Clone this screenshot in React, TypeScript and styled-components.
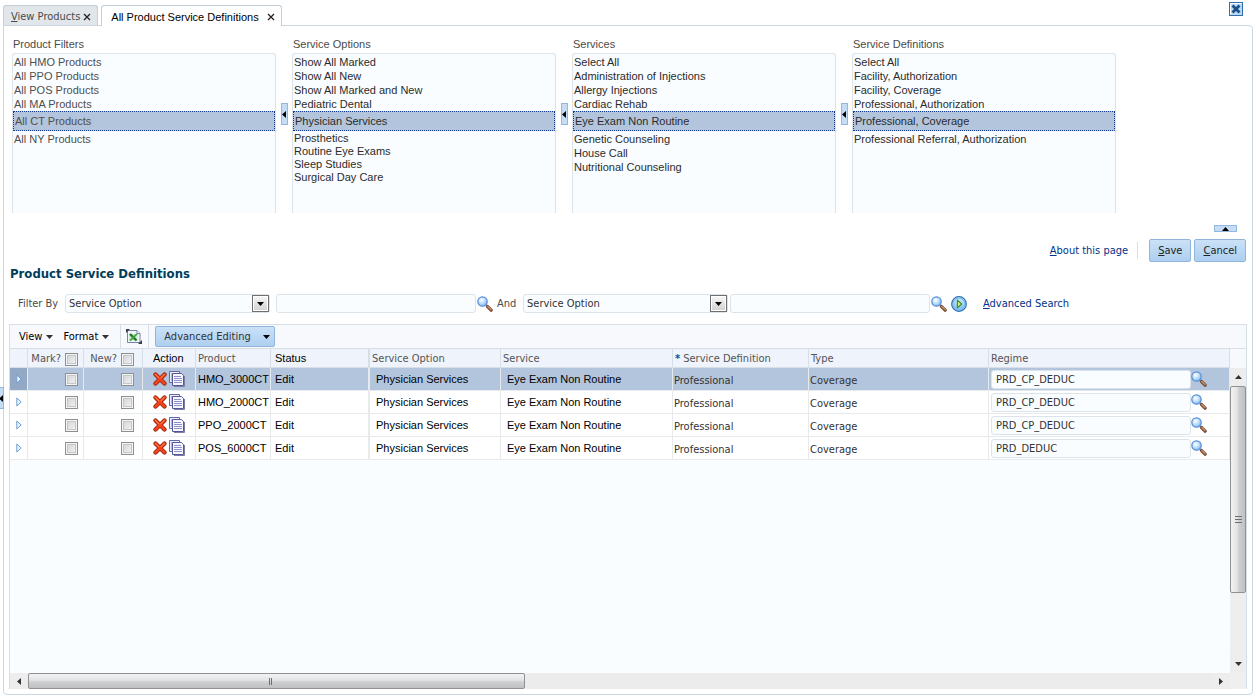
import React from "react";
import styled, { createGlobalStyle, css } from "styled-components";

const sans = `"Liberation Sans", Arial, sans-serif`;
const tahoma = `Tahoma, "DejaVu Sans Condensed", "DejaVu Sans", sans-serif`;
const line = "#d6dfe6";
const selected = "#b3c5dc";
const pale = "#fafdff";

const GlobalStyle = createGlobalStyle`
  * { box-sizing: border-box; }
  body { margin: 0; background: #fff; color: #333; font: 11px/14px ${sans}; }
  button, input, select { font: inherit; color: inherit; margin: 0; }
  button { cursor: pointer; }
  svg { display: block; flex: none; }
`;

const Page = styled.div`
  min-height: 100vh;
  display: flex;
  flex-direction: column;
  padding: 5px 3px 3px;
`;

/* ---------- tabs ---------- */
const TabBar = styled.div`
  display: flex;
  align-items: flex-end;
  gap: 3px;
  height: 20px;
`;

const Tab = styled.div<{ $active?: boolean }>`
  display: flex;
  align-items: center;
  gap: ${(p) => (p.$active ? 8 : 3)}px;
  height: ${(p) => (p.$active ? 21 : 20)}px;
  margin-bottom: ${(p) => (p.$active ? -1 : 0)}px;
  padding: 2px 6px 0 ${(p) => (p.$active ? 9 : 7)}px;
  border: 1px solid #c3ced8;
  border-bottom: 0;
  border-radius: 3px 3px 0 0;
  background: ${(p) => (p.$active ? "#fff" : "#e0e6ea")};
  color: ${(p) => (p.$active ? "#000" : "#4a4a4a")};
  z-index: 1;
`;

const TabLabel = styled.button<{ $wide?: boolean }>`
  padding: 0;
  border: 0;
  background: none;
  white-space: nowrap;
  font-family: ${(p) => (p.$wide ? sans : tahoma)};
`;

const IconButton = styled.button`
  display: flex;
  padding: 0;
  border: 0;
  background: none;
`;

const WindowClose = styled(IconButton)`
  margin: 0 10px 0 auto;
  height: 23px;
`;

const Panel = styled.main`
  flex: 1;
  display: flex;
  flex-direction: column;
  border: 1px solid #ccd6e2;
  border-radius: 0 4px 4px 4px;
  padding: 0 5px 5px;
`;

/* ---------- filter lists ---------- */
const Filters = styled.section`
  display: flex;
  padding: 10px 3px 0;
`;

const FilterColumn = styled.div`
  flex: 0 1 264px;
  min-width: 0;
`;

const FilterLabel = styled.div`
  padding-left: 1px;
  line-height: 17px;
  color: #4a4a4a;
`;

const List = styled.ul`
  height: 160px;
  margin: 0;
  padding: 1px 0;
  list-style: none;
  border: 1px solid #dde4e9;
  border-bottom: 0;
  border-radius: 3px 3px 0 0;
  background: ${pale};
`;

const Option = styled.li<{ $selected?: boolean; $muted?: boolean; $after?: boolean; $tight?: boolean }>`
  height: ${(p) => (p.$tight ? 13 : 14)}px;
  line-height: ${(p) => (p.$tight ? 13 : 14)}px;
  padding-left: 1px;
  white-space: nowrap;
  color: ${(p) => (p.$muted ? "#4f4f4f" : "#2b2b2b")};
  ${(p) =>
    p.$selected &&
    css`
      height: 20px;
      line-height: 18px;
      border: 1px dotted #123a8c;
      background: ${selected};
    `}
  ${(p) => p.$after && css`margin-top: 1px;`}
`;

const SplitColumn = styled.div`
  flex: 0 0 16px;
  display: flex;
  justify-content: center;
  padding-top: 67px;
`;

const Collapser = styled.button<{ $wide?: boolean }>`
  display: flex;
  align-items: center;
  justify-content: center;
  width: ${(p) => (p.$wide ? 23 : 7)}px;
  height: ${(p) => (p.$wide ? 7 : 22)}px;
  padding: 0;
  border: 1px solid #94b7de;
  background: #c5dcf5;
`;

const EdgeCollapser = styled(Collapser)`
  position: absolute;
  left: -3px;
  top: 387px;
`;

const CollapseRow = styled.div`
  display: flex;
  justify-content: flex-end;
  padding: 12px 10px 7px 0;
`;

/* ---------- actions ---------- */
const Actions = styled.div`
  display: flex;
  align-items: center;
  justify-content: flex-end;
  gap: 3px;
  padding-right: 1px;
`;

const Link = styled.a`
  color: #003286;
  font-family: ${tahoma};
  text-decoration: none;
  white-space: nowrap;
`;

const Divider = styled.span`
  width: 1px;
  height: 17px;
  margin: 0 8px 0 6px;
  background: ${line};
`;

const Button = styled.button`
  height: 23px;
  padding: 0 8px;
  border: 1px solid #8fb5dd;
  border-radius: 2px;
  background: linear-gradient(#cbe1f7, #aecff0);
  color: #222;
  font-family: ${tahoma};
`;

const Title = styled.h1`
  margin: 3px 0 11px 1px;
  color: #003d5b;
  font: bold 13px/18px ${tahoma};
`;

/* ---------- query row ---------- */
const Query = styled.form`
  display: flex;
  align-items: center;
  padding-left: 9px;
  font-family: ${tahoma};
`;

const QueryLabel = styled.label<{ $width: number }>`
  width: ${(p) => p.$width}px;
  color: #4a4a4a;
  white-space: nowrap;
`;

const SelectBox = styled.div<{ $gap: number }>`
  position: relative;
  flex: 0 1 205px;
  margin-right: ${(p) => p.$gap}px;
`;

const Select = styled.select`
  appearance: none;
  display: block;
  width: 100%;
  height: 19px;
  padding: 0 20px 0 3px;
  border: 1px solid #dde4e9;
  border-radius: 3px;
  background: ${pale};
  color: #333;
`;

const SelectArrow = styled.span`
  position: absolute;
  top: 1px;
  right: 1px;
  width: 17px;
  height: 17px;
  display: flex;
  align-items: center;
  justify-content: center;
  border: 1px solid #6f6f6f;
  background: linear-gradient(#f6f6f6, #d2d2d2);
  box-shadow: inset 0 0 0 1px #fff;
  pointer-events: none;
`;

const TextInput = styled.input`
  flex: 0 1 200px;
  width: 200px;
  min-width: 0;
  height: 19px;
  padding: 0 4px;
  border: 1px solid #dde4e9;
  border-radius: 3px;
  background: ${pale};
`;

const QueryGo = styled(IconButton)`
  margin: 0 16px 0 4px;
`;

/* ---------- grid ---------- */
const Grid = styled.section`
  flex: 1;
  display: flex;
  flex-direction: column;
  margin-top: 11px;
  border: 1px solid ${line};
  border-bottom: 0;
`;

const Toolbar = styled.div`
  display: flex;
  height: 23px;
  background: #f7f9fd;
  font-family: ${tahoma};
`;

const ToolGroup = styled.div<{ $left: number; $right: number }>`
  display: flex;
  align-items: center;
  gap: 10px;
  padding: 0 ${(p) => p.$right}px 0 ${(p) => p.$left}px;
  border-right: 1px solid ${line};
`;

const MenuButton = styled.button`
  display: flex;
  align-items: center;
  gap: 4px;
  padding: 0;
  border: 0;
  background: none;
  color: #000;
`;

const EditingButton = styled(Button)`
  display: flex;
  align-items: center;
  gap: 12px;
  height: 21px;
  margin: 1px 6px;
  padding: 0 4px 0 8px;
  color: #333;
`;

const GridArea = styled.div`
  flex: 1;
  display: grid;
  grid-template-columns: minmax(0, 1fr) 16px;
  grid-template-rows: minmax(0, 1fr) 16px;
  border-top: 1px solid ${line};
`;

const TableArea = styled.div`
  background: ${pale};
`;

const Table = styled.table`
  width: 100%;
  table-layout: fixed;
  border-spacing: 0;
`;

const HeadCell = styled.th<{ $dark?: boolean; $pad?: number; $thick?: boolean }>`
  height: 19px;
  padding: ${(p) => (p.$dark ? 0 : 2)}px 0 0 ${(p) => p.$pad ?? 2}px;
  border-right: ${(p) => (p.$thick ? 2 : 1)}px solid ${line};
  border-bottom: 1px solid ${line};
  background: #eff3fb;
  color: ${(p) => (p.$dark ? "#000" : "#555")};
  font-family: ${(p) => (p.$dark ? sans : tahoma)};
  font-weight: normal;
  text-align: left;
  white-space: nowrap;
`;

const Row = styled.tr<{ $selected?: boolean }>`
  background: ${(p) => (p.$selected ? selected : "#fff")};
`;

const Cell = styled.td<{ $pad?: number; $black?: boolean; $low?: boolean; $thick?: boolean; $current?: boolean }>`
  height: 23px;
  padding: ${(p) => (p.$low ? 3 : 0)}px 0 0 ${(p) => p.$pad ?? 2}px;
  border-right: ${(p) => (p.$thick ? 2 : 1)}px solid #e6eaed;
  border-bottom: 1px solid #e6eaed;
  color: ${(p) => (p.$black ? "#000" : "#333")};
  font-family: ${(p) => (p.$black ? sans : tahoma)};
  white-space: nowrap;
  ${(p) => p.$current && css`background: #93a8c4;`}
`;

const CheckSlot = styled.label<{ $right: number }>`
  display: flex;
  align-items: center;
  justify-content: flex-end;
  gap: 4px;
  padding-right: ${(p) => p.$right}px;
`;

const Check = styled.input.attrs({ type: "checkbox" })`
  appearance: none;
  width: 13px;
  height: 13px;
  border: 1px solid #8e8f8f;
  background: linear-gradient(135deg, #cfd1d4, #f6f6f6);
  box-shadow: inset 0 0 0 1px #f4f4f4, inset 0 0 0 2px #c3c6ca;
`;

const Inline = styled.div<{ $gap?: number }>`
  display: flex;
  align-items: center;
  gap: ${(p) => p.$gap ?? 0}px;
`;

const AndLabel = styled(QueryLabel)`
  margin-left: 4px;
`;

const SearchButton = styled(IconButton)`
  padding-left: 1px;
`;

const Required = styled.span`
  margin-right: 3px;
  color: #0b4fa0;
  font-weight: bold;
`;

/* ---------- scroll bars ---------- */
const VBar = styled.div`
  display: flex;
  flex-direction: column;
  padding-top: 19px;
  background: linear-gradient(#f7f9fd 19px, #eeeeee 19px);
`;

const HBar = styled.div`
  display: flex;
  background: #ececec;
`;

const Corner = styled.div`
  background: #efefef;
`;

const ScrollEnd = styled.button`
  flex: 0 0 18px;
  display: flex;
  align-items: center;
  justify-content: center;
  padding: 0;
  border: 0;
  background: #ededed;
`;

const Track = styled.div<{ $column?: boolean }>`
  flex: 1;
  display: flex;
  flex-direction: ${(p) => (p.$column ? "column" : "row")};
`;

const Thumb = styled.button<{ $column?: boolean }>`
  flex: 0 0 ${(p) => (p.$column ? 77 : 42)}%;
  display: flex;
  align-items: center;
  justify-content: center;
  padding: ${(p) => (p.$column ? "60px 0 0" : "0 12px 0 0")};
  border: 1px solid #8f9194;
  border-radius: 2px;
  background: linear-gradient(${(p) => (p.$column ? "90deg" : "180deg")}, #f3f3f3, #e2e3e4 45%, #cfd0d2 55%, #bfc0c2);
`;

/* ---------- drawings ---------- */
type Dir = "left" | "right" | "up" | "down";

const trianglePath: Record<Dir, [number, number, string]> = {
  left: [4, 7, "M4 0v7L0 3.5z"],
  right: [4, 7, "M0 0v7L4 3.5z"],
  up: [7, 4, "M0 4h7L3.5 0z"],
  down: [7, 4, "M0 0h7L3.5 4z"],
};

function Arrow({ dir, color = "#000" }: { dir: Dir; color?: string }) {
  const [w, h, d] = trianglePath[dir];
  return (
    <svg width={w} height={h} viewBox={`0 0 ${w} ${h}`} aria-hidden="true">
      <path d={d} fill={color} />
    </svg>
  );
}

function CloseGlyph() {
  return (
    <svg width="8" height="8" viewBox="0 0 8 8" aria-hidden="true">
      <path d="M1 1l6 6M7 1L1 7" stroke="#222" strokeWidth="1.3" fill="none" />
    </svg>
  );
}

function WindowCloseIcon() {
  return (
    <svg width="14" height="14" viewBox="0 0 14 14" aria-hidden="true">
      <rect x=".5" y=".5" width="13" height="13" fill="#b9d6f3" stroke="#2f6fb0" />
      <path d="M1.500 12.500V1.500h11" stroke="#fff" fill="none" />
      <path d="M3.500 3.500l7 7M10.500 3.500l-7 7" stroke="#1b4f87" strokeWidth="2.800" fill="none" />
    </svg>
  );
}

function SearchIcon() {
  return (
    <svg width="16" height="16" viewBox="0 0 16 16" aria-hidden="true">
      <defs>
        <radialGradient id="lens" cx=".4" cy=".35" r=".65">
          <stop offset="0" stopColor="#fff" />
          <stop offset=".6" stopColor="#b9dcfb" />
          <stop offset="1" stopColor="#7fb4ee" />
        </radialGradient>
      </defs>
      <path d="M9 9l1.800 1.800" stroke="#7c8ea5" strokeWidth="2" />
      <path d="M10.600 10.600l3.500 3.500" stroke="#7a4a32" strokeWidth="3.400" strokeLinecap="round" />
      <path d="M10.800 10.400l3.200 3.200" stroke="#c79072" strokeWidth="1.400" strokeLinecap="round" />
      <circle cx="5.500" cy="5.500" r="4.700" fill="url(#lens)" stroke="#5a8fd8" strokeWidth="1.200" />
    </svg>
  );
}

function GoIcon() {
  return (
    <svg width="16" height="16" viewBox="0 0 16 16" aria-hidden="true">
      <defs>
        <linearGradient id="go" x1="0" y1="0" x2="0" y2="1">
          <stop offset="0" stopColor="#d9eefc" />
          <stop offset="1" stopColor="#6fb8ea" />
        </linearGradient>
      </defs>
      <circle cx="8" cy="8" r="7.300" fill="url(#go)" stroke="#2a6cb3" strokeWidth="1.200" />
      <circle cx="8" cy="8" r="5.800" fill="none" stroke="#7cc0ee" strokeWidth="1.200" />
      <path d="M6.400 4.200v7.600L10.600 8z" fill="#c9ee7c" stroke="#3f8f2a" strokeWidth="1.100" strokeLinejoin="round" />
    </svg>
  );
}

function DeleteIcon() {
  return (
    <svg width="14" height="14" viewBox="0 0 14 14" aria-hidden="true">
      <path d="M2.500 2.500l9 9M11.500 2.500l-9 9" stroke="#8e1c08" strokeWidth="4.200" strokeLinecap="round" />
      <path d="M2.500 2.500l9 9M11.500 2.500l-9 9" stroke="#f4451c" strokeWidth="2.600" strokeLinecap="round" />
      <path d="M2.300 2.200l3.500 3.500M11.300 2.300L8 5.600" stroke="#ff9468" strokeWidth=".9" strokeLinecap="round" />
    </svg>
  );
}

function CopyIcon() {
  return (
    <svg width="16" height="16" viewBox="0 0 16 16" aria-hidden="true">
      <path d="M.5.5h10v11H.5z" fill="#eceefb" stroke="#6767a8" />
      <path d="M2 3h2M2 5h2M2 7h2M2 9h2" stroke="#7d80bd" />
      <path d="M3.500 2.500h9l2 2v10h-11z" fill="#f6f7ff" stroke="#56569c" />
      <path d="M5 5.500h7M5 7.500h8M5 9.500h8M5 11.500h8" stroke="#8e91cb" />
      <path d="M15.500 5v10.500H5" stroke="#7d7da6" fill="none" />
    </svg>
  );
}

function ExcelIcon() {
  return (
    <svg width="16" height="15" viewBox="0 0 16 15" aria-hidden="true">
      <path d="M1.500 1.500h9.500l3 3v9H1.500z" fill="#f1f6f8" stroke="#7485ad" />
      <path d="M11 1.500v3h3" fill="#fff" stroke="#7485ad" />
      <path d="M3 5h8.500v6.500H3z" fill="#cfe9cd" />
      <path d="M4 5l6.500 6.500" stroke="#1e7a2a" strokeWidth="2.400" />
      <path d="M11 4.800L4 11.600" stroke="#3fa544" strokeWidth="1.800" />
      <path d="M0 0h4L0 4zM16 15h-4l4-4z" fill="#3a3f48" />
    </svg>
  );
}

function Disclosure() {
  return (
    <svg width="6" height="10" viewBox="0 0 6 10" aria-hidden="true">
      <path d="M.8 1v8L5.200 5z" fill="#e9f4ff" stroke="#6f9fd0" />
    </svg>
  );
}

function Grip({ column }: { column?: boolean }) {
  return (
    <svg width="7" height="7" viewBox="0 0 7 7" aria-hidden="true">
      <path d={column ? "M0 .5h7M0 3.500h7M0 6.500h7" : "M2.500 0v7M4.500 0v7"} stroke="#6d6f73" />
    </svg>
  );
}

/* ---------- data ---------- */
type FilterList = { label: string; items: string[]; selected: string; muted?: boolean; tight?: boolean };

const filterLists: FilterList[] = [
  {
    label: "Product Filters",
    items: ["All HMO Products", "All PPO Products", "All POS Products", "All MA Products", "All CT Products", "All NY Products"],
    selected: "All CT Products",
    muted: true,
  },
  {
    label: "Service Options",
    items: [
      "Show All Marked", "Show All New", "Show All Marked and New", "Pediatric Dental", "Physician Services",
      "Prosthetics", "Routine Eye Exams", "Sleep Studies", "Surgical Day Care",
    ],
    selected: "Physician Services",
    tight: true,
  },
  {
    label: "Services",
    items: [
      "Select All", "Administration of Injections", "Allergy Injections", "Cardiac Rehab", "Eye Exam Non Routine",
      "Genetic Counseling", "House Call", "Nutritional Counseling",
    ],
    selected: "Eye Exam Non Routine",
  },
  {
    label: "Service Definitions",
    items: [
      "Select All", "Facility, Authorization", "Facility, Coverage", "Professional, Authorization",
      "Professional, Coverage", "Professional Referral, Authorization",
    ],
    selected: "Professional, Coverage",
  },
];

const rows = [
  { product: "HMO_3000CT", regime: "PRD_CP_DEDUC" },
  { product: "HMO_2000CT", regime: "PRD_CP_DEDUC" },
  { product: "PPO_2000CT", regime: "PRD_CP_DEDUC" },
  { product: "POS_6000CT", regime: "PRD_DEDUC" },
];

const columnWidths = [18, 56, 59, 53, 75, 99, 131, 172, 136, 180];

function FilterBox({ list }: { list: FilterList }) {
  const at = list.items.indexOf(list.selected);
  const id = list.label.replace(/ /g, "-").toLowerCase();
  return (
    <FilterColumn>
      <FilterLabel id={id}>{list.label}</FilterLabel>
      <List role="listbox" aria-labelledby={id} tabIndex={0}>
        {list.items.map((item, i) => (
          <Option
            key={item}
            role="option"
            aria-selected={i === at}
            $selected={i === at}
            $muted={list.muted}
            $after={i === at + 1}
            $tight={list.tight && i > at}
          >
            {item}
          </Option>
        ))}
      </List>
    </FilterColumn>
  );
}

function ServiceSelect({ id, gap }: { id: string; gap: number }) {
  return (
    <SelectBox $gap={gap}>
      <Select id={id}>
        <option>Service Option</option>
      </Select>
      <SelectArrow>
        <Arrow dir="down" />
      </SelectArrow>
    </SelectBox>
  );
}

export default function App() {
  return (
    <Page>
      <GlobalStyle />
      <TabBar>
        <Tab>
          <TabLabel><u>V</u>iew Products</TabLabel>
          <IconButton aria-label="Close View Products"><CloseGlyph /></IconButton>
        </Tab>
        <Tab $active>
          <TabLabel $wide>All Product Service Definitions</TabLabel>
          <IconButton aria-label="Close All Product Service Definitions"><CloseGlyph /></IconButton>
        </Tab>
        <WindowClose aria-label="Close"><WindowCloseIcon /></WindowClose>
      </TabBar>

      <Panel>
        <Filters>
          {filterLists.map((list, i) => (
            <React.Fragment key={list.label}>
              {i > 0 && (
                <SplitColumn>
                  <Collapser aria-label={`Collapse before ${list.label}`}><Arrow dir="left" /></Collapser>
                </SplitColumn>
              )}
              <FilterBox list={list} />
            </React.Fragment>
          ))}
        </Filters>

        <CollapseRow>
          <Collapser $wide aria-label="Collapse filters"><Arrow dir="up" /></Collapser>
        </CollapseRow>

        <Actions>
          <Link href="#about"><u>A</u>bout this page</Link>
          <Divider />
          <Button><u>S</u>ave</Button>
          <Button><u>C</u>ancel</Button>
        </Actions>

        <Title>Product Service Definitions</Title>

        <Query onSubmit={(e) => e.preventDefault()}>
          <QueryLabel $width={47} htmlFor="first-filter">Filter By</QueryLabel>
          <ServiceSelect id="first-filter" gap={6} />
          <TextInput aria-label="First value" />
          <SearchButton type="button" aria-label="Search first value"><SearchIcon /></SearchButton>
          <AndLabel $width={26} htmlFor="second-filter">And</AndLabel>
          <ServiceSelect id="second-filter" gap={2} />
          <TextInput aria-label="Second value" />
          <SearchButton type="button" aria-label="Search second value"><SearchIcon /></SearchButton>
          <QueryGo aria-label="Run query"><GoIcon /></QueryGo>
          <Link href="#advanced"><u>A</u>dvanced Search</Link>
        </Query>

        <Grid>
          <Toolbar>
            <ToolGroup $left={9} $right={11}>
              <MenuButton>View <Arrow dir="down" color="#333" /></MenuButton>
              <MenuButton>Format <Arrow dir="down" color="#333" /></MenuButton>
            </ToolGroup>
            <ToolGroup $left={5} $right={6}>
              <IconButton aria-label="Export to Excel"><ExcelIcon /></IconButton>
            </ToolGroup>
            <EditingButton>Advanced Editing <Arrow dir="down" /></EditingButton>
          </Toolbar>

          <GridArea>
            <TableArea>
              <Table>
                <colgroup>
                  {columnWidths.map((w, i) => <col key={i} width={w} />)}
                  <col />
                </colgroup>
                <thead>
                  <tr>
                    <HeadCell aria-label="Expand" />
                    <HeadCell $dark={false}><CheckSlot $right={5}>Mark? <Check /></CheckSlot></HeadCell>
                    <HeadCell><CheckSlot $right={8}>New? <Check /></CheckSlot></HeadCell>
                    <HeadCell $dark $pad={10}>Action</HeadCell>
                    <HeadCell>Product</HeadCell>
                    <HeadCell $dark $pad={4} $thick>Status</HeadCell>
                    <HeadCell>Service Option</HeadCell>
                    <HeadCell>Service</HeadCell>
                    <HeadCell><Required>*</Required>Service Definition</HeadCell>
                    <HeadCell>Type</HeadCell>
                    <HeadCell>Regime</HeadCell>
                  </tr>
                </thead>
                <tbody>
                  {rows.map((row, i) => (
                    <Row key={row.product} $selected={i === 0}>
                      <Cell $pad={6} $current={i === 0}>
                        <IconButton aria-label={`Expand ${row.product}`}><Disclosure /></IconButton>
                      </Cell>
                      <Cell><CheckSlot $right={5}><Check aria-label="Mark" /></CheckSlot></Cell>
                      <Cell><CheckSlot $right={8}><Check aria-label="New" /></CheckSlot></Cell>
                      <Cell $pad={10}>
                        <Inline $gap={2}>
                          <IconButton aria-label="Delete"><DeleteIcon /></IconButton>
                          <IconButton aria-label="Copy"><CopyIcon /></IconButton>
                        </Inline>
                      </Cell>
                      <Cell $black>{row.product}</Cell>
                      <Cell $black $pad={4} $thick>Edit</Cell>
                      <Cell $black $pad={6}>Physician Services</Cell>
                      <Cell $black $pad={6}>Eye Exam Non Routine</Cell>
                      <Cell $low $pad={1}>Professional</Cell>
                      <Cell $low $pad={1}>Coverage</Cell>
                      <Cell>
                        <Inline>
                          <TextInput aria-label="Regime" defaultValue={row.regime} />
                          <IconButton aria-label="Search regime"><SearchIcon /></IconButton>
                        </Inline>
                      </Cell>
                    </Row>
                  ))}
                </tbody>
              </Table>
            </TableArea>
            <VBar>
              <ScrollEnd aria-label="Scroll up"><Arrow dir="up" color="#333" /></ScrollEnd>
              <Track $column><Thumb $column aria-label="Scroll vertically"><Grip column /></Thumb></Track>
              <ScrollEnd aria-label="Scroll down"><Arrow dir="down" color="#333" /></ScrollEnd>
            </VBar>
            <HBar>
              <ScrollEnd aria-label="Scroll left"><Arrow dir="left" color="#333" /></ScrollEnd>
              <Track><Thumb aria-label="Scroll horizontally"><Grip /></Thumb></Track>
              <ScrollEnd aria-label="Scroll right"><Arrow dir="right" color="#333" /></ScrollEnd>
            </HBar>
            <Corner />
          </GridArea>
        </Grid>
      </Panel>
      <EdgeCollapser aria-label="Expand side panel"><Arrow dir="left" /></EdgeCollapser>
    </Page>
  );
}
